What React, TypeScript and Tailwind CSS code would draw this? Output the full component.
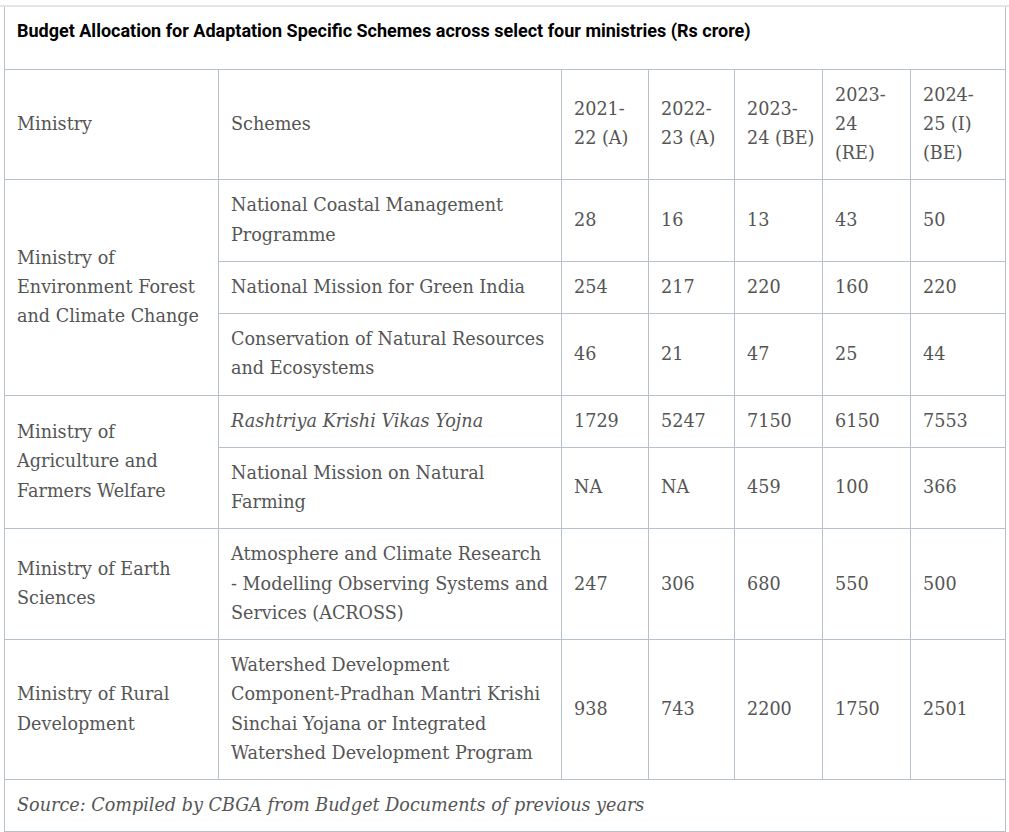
const serif = "font-['DejaVu_Serif',serif] text-[17.6px] leading-[29.25px] text-[#555]";
const cell = "border border-[#b7c1cc] px-[12px] py-[11px] align-middle whitespace-nowrap";

type Row = {
  ministry?: React.ReactNode;
  span?: number;
  scheme: React.ReactNode;
  italic?: boolean;
  values: string[];
};

const rows: Row[] = [
  {
    ministry: (
      <>
        Ministry of
        <br />
        Environment Forest
        <br />
        and Climate Change
      </>
    ),
    span: 3,
    scheme: (
      <>
        National Coastal Management
        <br />
        Programme
      </>
    ),
    values: ['28', '16', '13', '43', '50'],
  },
  { scheme: 'National Mission for Green India', values: ['254', '217', '220', '160', '220'] },
  {
    scheme: (
      <>
        Conservation of Natural Resources
        <br />
        and Ecosystems
      </>
    ),
    values: ['46', '21', '47', '25', '44'],
  },
  {
    ministry: (
      <>
        Ministry of
        <br />
        Agriculture and
        <br />
        Farmers Welfare
      </>
    ),
    span: 2,
    scheme: 'Rashtriya Krishi Vikas Yojna',
    italic: true,
    values: ['1729', '5247', '7150', '6150', '7553'],
  },
  {
    scheme: (
      <>
        National Mission on Natural
        <br />
        Farming
      </>
    ),
    values: ['NA', 'NA', '459', '100', '366'],
  },
  {
    ministry: (
      <>
        Ministry of Earth
        <br />
        Sciences
      </>
    ),
    span: 1,
    scheme: (
      <>
        Atmosphere and Climate Research
        <br />
        - Modelling Observing Systems and
        <br />
        Services (ACROSS)
      </>
    ),
    values: ['247', '306', '680', '550', '500'],
  },
  {
    ministry: (
      <>
        Ministry of Rural
        <br />
        Development
      </>
    ),
    span: 1,
    scheme: (
      <>
        Watershed Development
        <br />
        Component-Pradhan Mantri Krishi
        <br />
        Sinchai Yojana or Integrated
        <br />
        Watershed Development Program
      </>
    ),
    values: ['938', '743', '2200', '1750', '2501'],
  },
];

export default function App() {
  return (
    <div className="min-h-[832px] w-[1009px] bg-white pt-[5px]">
      <div className="h-[2px] w-full bg-[#e5e5e5]" />
      <table className={`ml-[4px] w-[1001px] table-fixed border-collapse ${serif}`}>
        <colgroup>
          <col className="w-[214px]" />
          <col className="w-[343px]" />
          <col className="w-[87px]" />
          <col className="w-[86px]" />
          <col className="w-[88px]" />
          <col className="w-[88px]" />
          <col className="w-[95px]" />
        </colgroup>
        <tbody>
          <tr>
            <td
              colSpan={7}
              className="h-[62px] border border-t-0 border-[#b7c1cc] px-[12px] pt-[14px] pb-0 align-top font-['Roboto',sans-serif] text-[18px] font-bold leading-[20px] text-black"
            >
              Budget Allocation for Adaptation Specific Schemes across select four ministries (Rs crore)
            </td>
          </tr>
          <tr>
            <td className={cell}>Ministry</td>
            <td className={cell}>Schemes</td>
            <td className={cell}>
              2021-
              <br />
              22 (A)
            </td>
            <td className={cell}>
              2022-
              <br />
              23 (A)
            </td>
            <td className={cell}>
              2023-
              <br />
              24 (BE)
            </td>
            <td className={cell}>
              2023-
              <br />
              24
              <br />
              (RE)
            </td>
            <td className={cell}>
              2024-
              <br />
              25 (I)
              <br />
              (BE)
            </td>
          </tr>
          {rows.map((r, i) => (
            <tr key={i}>
              {r.ministry && (
                <td rowSpan={r.span} className={cell}>
                  {r.ministry}
                </td>
              )}
              <td className={`${cell} ${r.italic ? 'italic' : ''}`}>{r.scheme}</td>
              {r.values.map((v, j) => (
                <td key={j} className={cell}>
                  {v}
                </td>
              ))}
            </tr>
          ))}
          <tr>
            <td colSpan={7} className={`${cell} h-[51px] italic`}>
              Source: Compiled by CBGA from Budget Documents of previous years
            </td>
          </tr>
        </tbody>
      </table>
    </div>
  );
}
